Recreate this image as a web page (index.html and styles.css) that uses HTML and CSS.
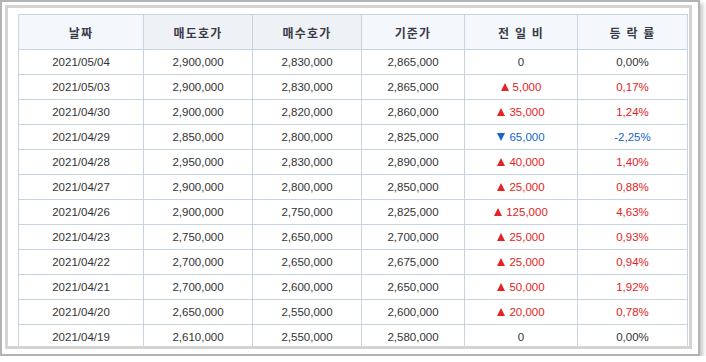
FILE: index.html
```html
<!DOCTYPE html>
<html lang="ko">
<head>
<meta charset="utf-8">
<link rel="stylesheet" href="styles.css">
</head>
<body>
<div class="frame">
  <div class="inner">
    <table class="quotes">
      <colgroup>
        <col class="c1"><col class="c2"><col class="c3"><col class="c4"><col class="c5"><col class="c6">
      </colgroup>
      <thead>
        <tr>
          <th>날짜</th><th class="dark">매도호가</th><th class="dark">매수호가</th><th>기준가</th><th>전 일 비</th><th>등 락 률</th>
        </tr>
      </thead>
      <tbody>
        <tr><td>2021/05/04</td><td>2,900,000</td><td>2,830,000</td><td>2,865,000</td><td>0</td><td>0,00%</td></tr>
        <tr><td>2021/05/03</td><td>2,900,000</td><td>2,830,000</td><td>2,865,000</td><td class="up"><span class="tri-up"></span>5,000</td><td class="up">0,17%</td></tr>
        <tr><td>2021/04/30</td><td>2,900,000</td><td>2,820,000</td><td>2,860,000</td><td class="up"><span class="tri-up"></span>35,000</td><td class="up">1,24%</td></tr>
        <tr><td>2021/04/29</td><td>2,850,000</td><td>2,800,000</td><td>2,825,000</td><td class="down"><span class="tri-down"></span>65,000</td><td class="down">-2,25%</td></tr>
        <tr><td>2021/04/28</td><td>2,950,000</td><td>2,830,000</td><td>2,890,000</td><td class="up"><span class="tri-up"></span>40,000</td><td class="up">1,40%</td></tr>
        <tr><td>2021/04/27</td><td>2,900,000</td><td>2,800,000</td><td>2,850,000</td><td class="up"><span class="tri-up"></span>25,000</td><td class="up">0,88%</td></tr>
        <tr><td>2021/04/26</td><td>2,900,000</td><td>2,750,000</td><td>2,825,000</td><td class="up"><span class="tri-up"></span>125,000</td><td class="up">4,63%</td></tr>
        <tr><td>2021/04/23</td><td>2,750,000</td><td>2,650,000</td><td>2,700,000</td><td class="up"><span class="tri-up"></span>25,000</td><td class="up">0,93%</td></tr>
        <tr><td>2021/04/22</td><td>2,700,000</td><td>2,650,000</td><td>2,675,000</td><td class="up"><span class="tri-up"></span>25,000</td><td class="up">0,94%</td></tr>
        <tr><td>2021/04/21</td><td>2,700,000</td><td>2,600,000</td><td>2,650,000</td><td class="up"><span class="tri-up"></span>50,000</td><td class="up">1,92%</td></tr>
        <tr><td>2021/04/20</td><td>2,650,000</td><td>2,550,000</td><td>2,600,000</td><td class="up"><span class="tri-up"></span>20,000</td><td class="up">0,78%</td></tr>
        <tr><td>2021/04/19</td><td>2,610,000</td><td>2,550,000</td><td>2,580,000</td><td>0</td><td>0,00%</td></tr>
      </tbody>
    </table>
  </div>
</div>
</body>
</html>
```
FILE: styles.css
```css
html, body {
  margin: 0;
  padding: 0;
  background: #ffffff;
}
.frame {
  box-sizing: border-box;
  width: 700px;
  height: 356px;
  border: 2px solid #b3b3b3;
  padding: 3px 6px 5px 3px;
  background: #ffffff;
  box-shadow: 3px 3px 4px rgba(0, 0, 0, 0.22);
}
.inner {
  box-sizing: border-box;
  width: 687px;
  height: 344px;
  border: 3px solid #d3d3d3;
  padding: 6px 0 0 10px;
  overflow: hidden;
}
.quotes {
  border-collapse: collapse;
  table-layout: fixed;
  width: 670px;
  font-family: "Liberation Sans", Arial, sans-serif;
  font-size: 11.5px;
  color: #333333;
}
.c1 { width: 125px; }
.c2 { width: 109px; }
.c3 { width: 109px; }
.c4 { width: 103px; }
.c5 { width: 113px; }
.c6 { width: 110px; }
.quotes th, .quotes td {
  border: 1px solid #c6d4e2;
  text-align: center;
  padding: 0;
  white-space: nowrap;
}
.quotes th {
  height: 34px;
  background: #f4f7fb;
  font-family: "Noto Sans CJK KR", sans-serif;
  font-size: 12px;
  font-weight: 700;
  letter-spacing: 1.2px;
  color: #3a3a48;
}
.quotes th.dark {
  background: #eef2f6;
}
.quotes td {
  height: 24px;
}
.quotes td.up { color: #e42323; }
.quotes td.down { color: #1466c8; }
.tri-up, .tri-down {
  display: inline-block;
  width: 0;
  height: 0;
  border-left: 4px solid transparent;
  border-right: 4px solid transparent;
  margin-right: 4px;
  vertical-align: 0px;
}
.tri-up {
  border-bottom: 8px solid #e42323;
}
.tri-down {
  border-top: 8px solid #1466c8;
}
```
